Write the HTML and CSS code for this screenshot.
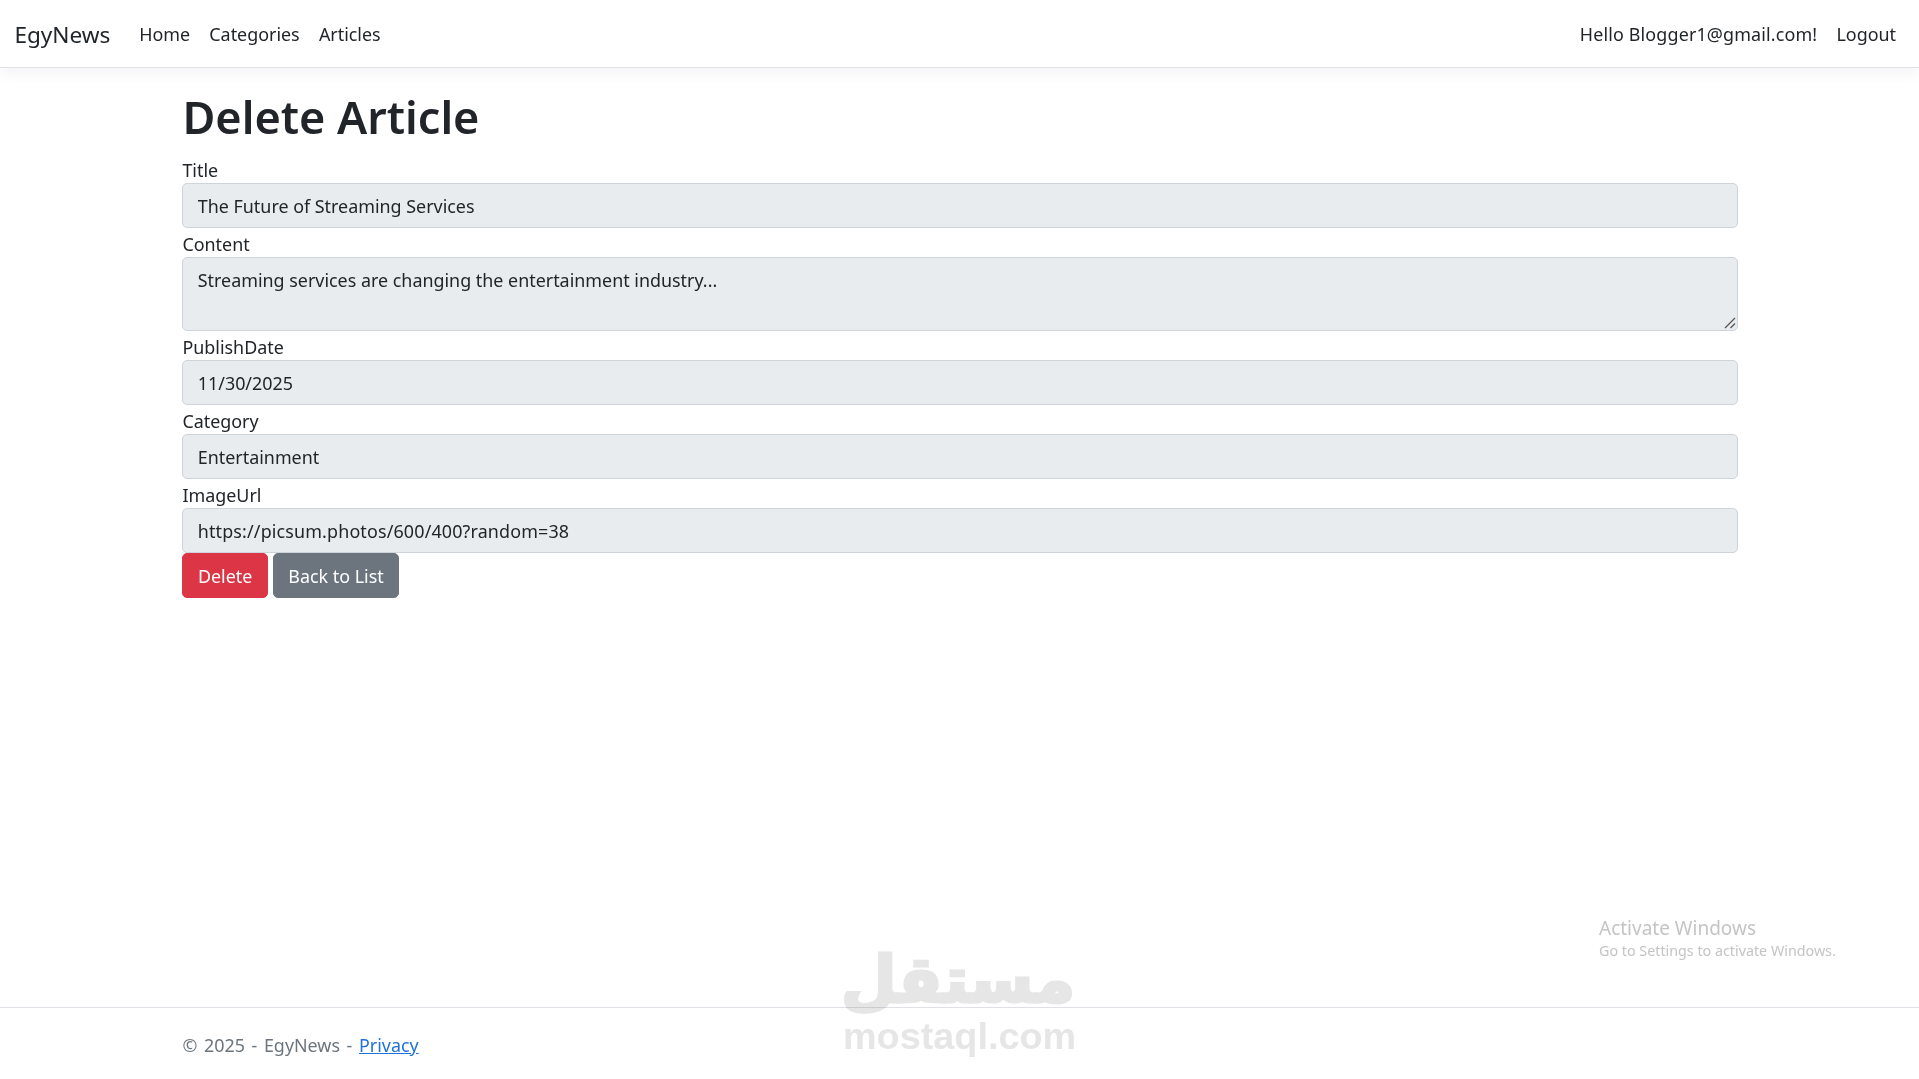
FILE: index.html
```html
<!DOCTYPE html>
<html lang="en">
<head>
    <meta charset="UTF-8">
    <meta name="viewport" content="width=device-width, initial-scale=1.0">
    <title>Delete Article - EgyNews</title>
    <link rel="stylesheet" href="styles.css">
</head>
<body>
    <header class="navbar">
        <a class="brand" href="#">EgyNews</a>
        <nav class="nav-left">
            <a class="nav-link" href="#">Home</a>
            <a class="nav-link" href="#">Categories</a>
            <a class="nav-link" href="#">Articles</a>
        </nav>
        <nav class="nav-right">
            <a class="nav-link user-link" href="#">Hello Blogger1@gmail.com!</a>
            <a class="nav-link" href="#">Logout</a>
        </nav>
    </header>

    <main class="container">
        <h1>Delete Article</h1>
        <form class="delete-form">
            <label for="title">Title</label>
            <input id="title" class="form-control" type="text" value="The Future of Streaming Services" readonly>

            <label for="content">Content</label>
            <div class="area-wrap">
                <textarea id="content" class="form-control form-area" readonly>Streaming services are changing the entertainment industry...</textarea>
                <svg class="grip" width="12" height="12" viewBox="0 0 12 12">
                    <path d="M11 1 L1 11 M11 6.5 L6.5 11" stroke="#555" stroke-width="1.3" fill="none"/>
                </svg>
            </div>

            <label for="publishDate">PublishDate</label>
            <input id="publishDate" class="form-control" type="text" value="11/30/2025" readonly>

            <label for="category">Category</label>
            <input id="category" class="form-control" type="text" value="Entertainment" readonly>

            <label for="imageUrl">ImageUrl</label>
            <input id="imageUrl" class="form-control url-input" type="text" value="https://picsum.photos/600/400?random=38" readonly>

            <div class="actions">
                <button type="button" class="btn btn-danger">Delete</button>
                <a class="btn btn-secondary" href="#">Back to List</a>
            </div>
        </form>
    </main>

    <footer class="footer">
        <div class="footer-inner">&copy; 2025 - EgyNews - <a href="#">Privacy</a></div>
    </footer>

    <!-- overlays that sit on top of the page in the screenshot -->
    <div class="activate">
        <div class="activate-title">Activate Windows</div>
        <div class="activate-sub">Go to Settings to activate Windows.</div>
    </div>
    <div class="watermark">
        <div class="watermark-ar" lang="ar" dir="rtl">مستقل</div>
        <div class="watermark-en">mostaql.com</div>
    </div>
</body>
</html>
```

FILE: styles.css
```css
* {
    margin: 0;
    padding: 0;
    box-sizing: border-box;
}

body {
    font-family: "Noto Sans", "Open Sans", sans-serif;
    font-size: 17.9px;
    line-height: 29px;
    color: #212529;
    background: white;
    min-height: 100vh;
    display: flex;
    flex-direction: column;
}

a {
    color: inherit;
    text-decoration: none;
}

.navbar {
    display: flex;
    align-items: center;
    height: 68px;
    padding: 2px 13.4px 0 14.4px;
    background: white;
    border-bottom: 1px solid #dee2e6;
    box-shadow: 0 5px 14px rgba(0, 0, 0, 0.05);
    margin-bottom: 19px;
}

.brand {
    font-size: 22.6px;
    margin-right: 19.2px;
}

.nav-left {
    display: flex;
    flex: 1;
}

.nav-right {
    display: flex;
}

.nav-link {
    padding: 9.6px;
    color: #212529;
}

.user-link {
    letter-spacing: 0.15px;
}

.container {
    width: 1584px;
    margin-left: 168px;
    padding: 0 14.4px;
}

h1 {
    font-size: 45px;
    font-weight: 600;
    line-height: 58px;
    margin-bottom: 8px;
    padding-top: 1px;
}

.delete-form label {
    display: block;
    height: 29px;
    padding-top: 2px;
}

.form-control {
    display: block;
    width: 100%;
    height: 45px;
    padding: 7px 14.4px;
    font-family: inherit;
    font-size: 17.9px;
    line-height: 29px;
    color: #212529;
    background: #e9ecef;
    border: 1px solid #ced4da;
    border-radius: 5px;
    outline: none;
}

.url-input {
    letter-spacing: 0.15px;
}

.area-wrap {
    position: relative;
}

.form-area {
    height: 74px;
    padding-top: 8px;
    resize: none;
}

.grip {
    position: absolute;
    right: 2px;
    bottom: 2px;
}

.actions {
    display: flex;
    gap: 5px;
}

.btn {
    display: inline-block;
    height: 45px;
    padding: 8px 14.5px 6px;
    font-family: inherit;
    font-size: 17.9px;
    line-height: 29px;
    color: white;
    border: 1px solid transparent;
    border-radius: 5px;
}

.btn-danger {
    background: #dc3545;
    border-color: #dc3545;
}

.btn-secondary {
    background: #6c757d;
    border-color: #6c757d;
}

.footer {
    margin-top: auto;
    height: 72px;
    line-height: 74px;
    color: #6c757d;
    border-top: 1px solid #dee2e6;
}

.footer-inner {
    width: 1584px;
    margin-left: 168px;
    padding: 0 14.4px;
    word-spacing: 2px;
}

.footer a {
    color: #1f72d8;
    text-decoration: underline;
}

.activate {
    position: absolute;
    left: 1599px;
    top: 915px;
    color: #c4c4c4;
}

.activate-title {
    font-size: 19px;
    line-height: 26px;
}

.activate-sub {
    font-size: 14.3px;
    line-height: 19px;
}

.watermark {
    position: absolute;
    left: 843px;
    top: 945px;
    width: 232px;
    text-align: center;
    color: #e6e6e6;
    mix-blend-mode: multiply;
    pointer-events: none;
}

.watermark-ar {
    font-family: "DejaVu Sans", sans-serif;
    font-size: 64px;
    font-weight: bold;
    line-height: 71px;
    -webkit-text-stroke: 3px #e6e6e6;
}

.watermark-en {
    font-family: "Liberation Sans", sans-serif;
    font-size: 37.8px;
    font-weight: bold;
    line-height: 40px;
}
```
